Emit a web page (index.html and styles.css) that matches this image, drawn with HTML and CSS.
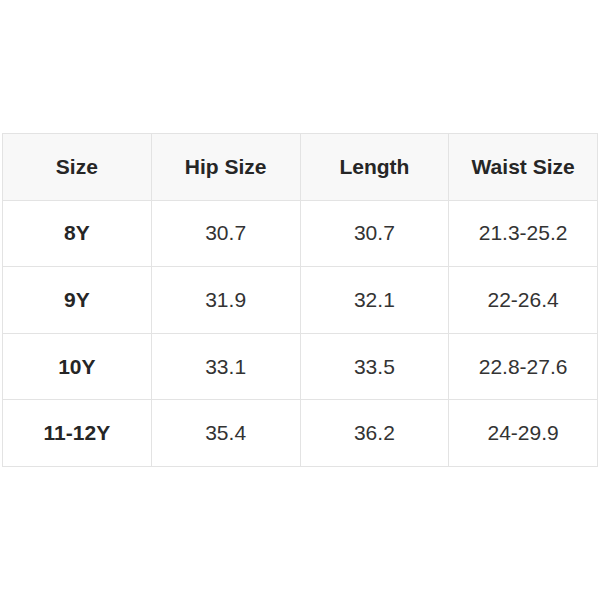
FILE: index.html
```html
<!DOCTYPE html>
<html>
<head>
<meta charset="utf-8">
<link rel="stylesheet" href="styles.css">
</head>
<body>
<div class="page">
<table class="size-table">
  <thead>
    <tr><th>Size</th><th>Hip Size</th><th>Length</th><th>Waist Size</th></tr>
  </thead>
  <tbody>
    <tr><th>8Y</th><td>30.7</td><td>30.7</td><td>21.3-25.2</td></tr>
    <tr><th>9Y</th><td>31.9</td><td>32.1</td><td>22-26.4</td></tr>
    <tr><th>10Y</th><td>33.1</td><td>33.5</td><td>22.8-27.6</td></tr>
    <tr><th>11-12Y</th><td>35.4</td><td>36.2</td><td>24-29.9</td></tr>
  </tbody>
</table>
</div>
</body>
</html>
```
FILE: styles.css
```css
html, body {
  margin: 0;
  padding: 0;
  background: #ffffff;
}
.page {
  width: 600px;
  height: 600px;
  padding: 133px 0 0 2px;
  box-sizing: border-box;
}
.size-table {
  width: 596px;
  border-collapse: collapse;
  table-layout: fixed;
  font-family: "Liberation Sans", Arial, sans-serif;
  font-size: 21px;
  color: #333333;
}
.size-table th,
.size-table td {
  border: 1px solid #e3e3e3;
  height: 65.6px;
  padding: 0;
  text-align: center;
  vertical-align: middle;
}
.size-table th {
  font-weight: bold;
  color: #262626;
}
.size-table thead th {
  background: #f8f8f8;
}
```
